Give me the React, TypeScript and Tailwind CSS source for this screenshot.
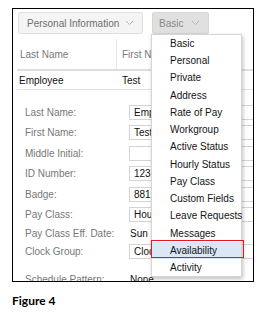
const menuItems = [
  'Basic',
  'Personal',
  'Private',
  'Address',
  'Rate of Pay',
  'Workgroup',
  'Active Status',
  'Hourly Status',
  'Pay Class',
  'Custom Fields',
  'Leave Requests',
  'Messages',
  'Availability',
  'Activity',
];

type Field = { label: string; value: string; input: boolean; gapAfter?: boolean };

const fields: Field[] = [
  { label: 'Last Name:', value: 'Employee', input: true },
  { label: 'First Name:', value: 'Test', input: true },
  { label: 'Middle Initial:', value: '', input: true },
  { label: 'ID Number:', value: '1234', input: true },
  { label: 'Badge:', value: '8815', input: true },
  { label: 'Pay Class:', value: 'Hourly', input: true },
  { label: 'Pay Class Eff. Date:', value: 'Sun Mar 1', input: false },
  { label: 'Clock Group:', value: 'Clock', input: true, gapAfter: true },
  { label: 'Schedule Pattern:', value: 'None', input: false },
];

const Chevron = () => (
  <svg width="9" height="6" viewBox="0 0 9 6" className="shrink-0">
    <polyline points="1,1 4.5,4.5 8,1" fill="none" stroke="#b5b5b5" strokeWidth="1" />
  </svg>
);

const App = () => {
  return (
    <div className="w-[273px] h-[315px] bg-white font-['Liberation_Sans',Arial,sans-serif] text-[10px] whitespace-nowrap">
      <div className="pt-[8px] pl-[12px]">
        <div className="relative w-[242px] h-[274px] border border-black overflow-hidden">
          {/* toolbar */}
          <div className="flex gap-[9px] pt-[3px] pl-[5px]">
            <div className="flex shrink-0 items-center justify-between w-[125px] h-[22px] pl-[8px] pr-[8px] bg-[#f4f4f4] border border-[#e0e0e0] rounded-[2px] text-[#6e6e6e]">
              <span>Personal Information</span>
              <Chevron />
            </div>
            <div className="flex shrink-0 items-center justify-between w-[57px] h-[22px] pl-[6px] pr-[8px] bg-[#e0e0e0] border border-[#d6d6d6] rounded-[2px] text-[#8a8a8a]">
              <span>Basic</span>
              <Chevron />
            </div>
          </div>

          {/* table */}
          <div className="mt-[5px] ml-[4px] w-[300px]">
            <div className="flex h-[32px] border-b-2 border-[#dedede] text-[#7a7a7a]">
              <div className="w-[100px] shrink-0 flex items-center pl-[3px] border-r border-[#e6e6e6]">Last Name</div>
              <div className="flex items-center pl-[5px]">First Name</div>
            </div>
            <div className="flex h-[19px] border-b border-[#e2e2e2] text-[#111]">
              <div className="w-[100px] shrink-0 flex items-center pl-[2px]">Employee</div>
              <div className="flex items-center pl-[5px]">Test</div>
            </div>
          </div>

          {/* form */}
          <div className="mt-[12px] pl-[12px] flex flex-col">
            {fields.map((f) => (
              <div
                key={f.label}
                className={`flex items-center shrink-0 ${f.input ? 'h-[20.5px]' : 'h-[16px]'} ${f.gapAfter ? 'mb-[10px]' : ''}`}
              >
                <div className="w-[104px] shrink-0 text-[#777]">{f.label}</div>
                {f.input ? (
                  <div className="w-[200px] shrink-0 h-[15px] flex items-center pl-[4px] border border-[#d4d4d4] bg-white text-[#111]">
                    {f.value}
                  </div>
                ) : (
                  <div className="pl-[1px] text-[#111]">{f.value}</div>
                )}
              </div>
            ))}
          </div>

          {/* dropdown menu */}
          <div className="absolute left-[138px] top-[24.7px] w-[91px] bg-white border border-[#d6d6d6] shadow-[1px_2px_4px_rgba(0,0,0,0.25)] text-[#141414]">
            {menuItems.map((item) => (
              <div
                key={item}
                className={`relative h-[17.28px] flex items-center pl-[18px] ${item === 'Availability' ? 'bg-[#dae7f5]' : ''}`}
              >
                {item}
                {item === 'Availability' && (
                  <span className="absolute -left-[1px] -right-[3px] -top-[1.5px] bottom-[1px] border-[1.5px] border-[#e8141e]" />
                )}
              </div>
            ))}
          </div>
        </div>
      </div>

      <div className="mt-[10px] pl-[12px] font-['Lato',sans-serif] font-bold text-[12px] text-black">Figure 4</div>
    </div>
  );
};

export default App;
